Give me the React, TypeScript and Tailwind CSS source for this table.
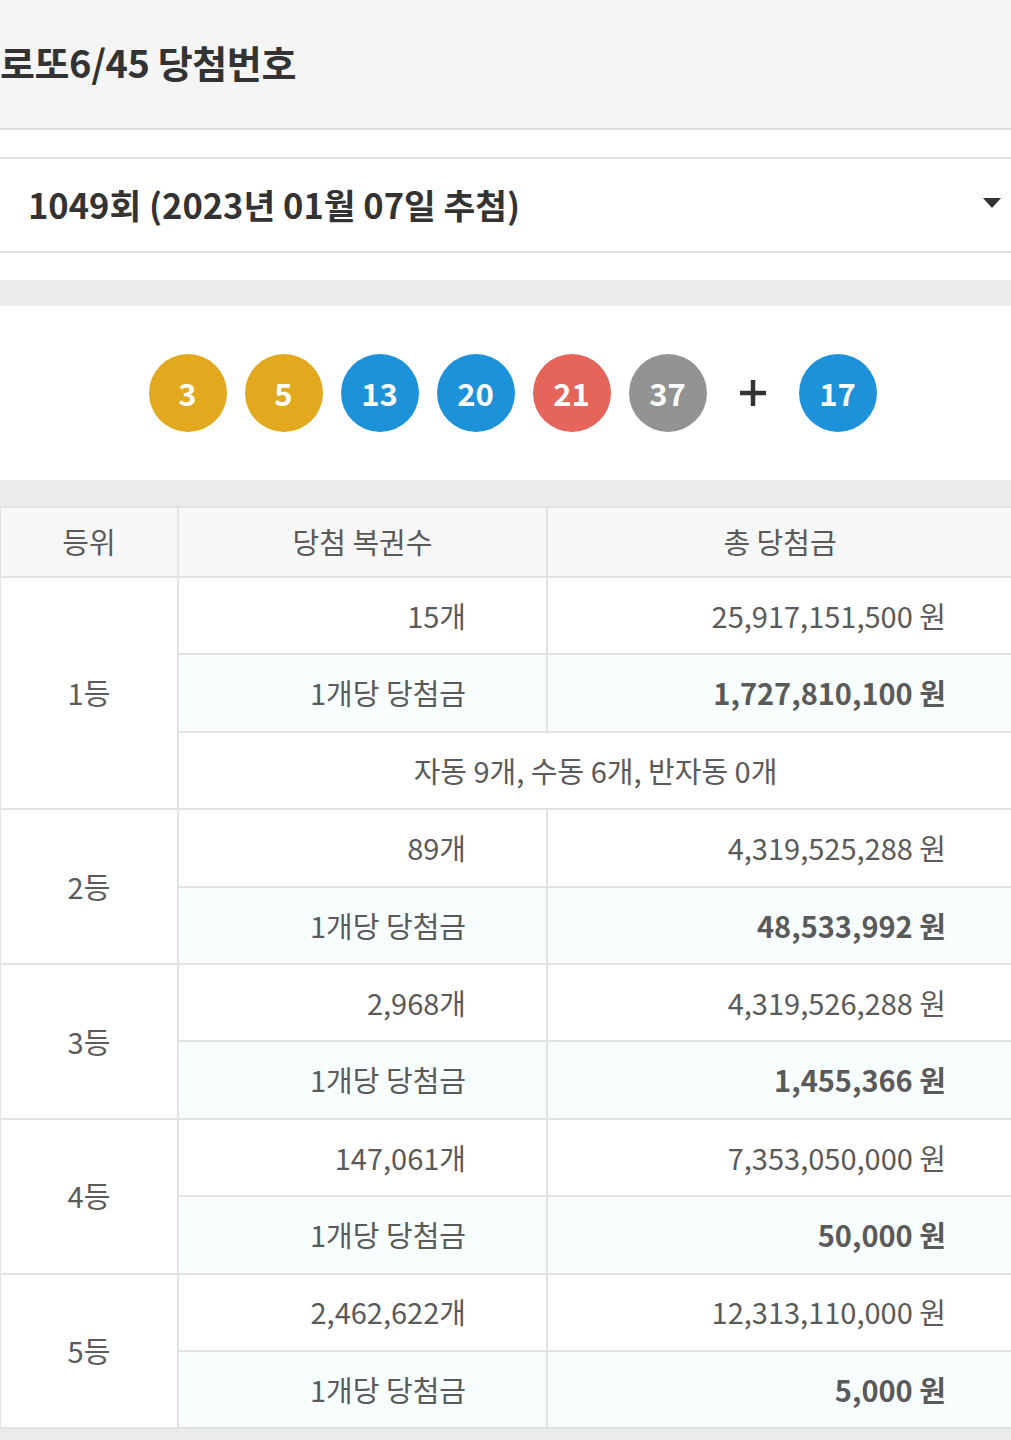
import React from "react";

const FONT = { fontFamily: '"Noto Sans CJK KR", "Noto Sans", sans-serif' };

const BALLS = [
  { n: 3, color: "bg-[#e2a91e]" },
  { n: 5, color: "bg-[#e2a91e]" },
  { n: 13, color: "bg-[#1d92d9]" },
  { n: 20, color: "bg-[#1d92d9]" },
  { n: 21, color: "bg-[#e5655a]" },
  { n: 37, color: "bg-[#939393]" },
];

const RANKS = [
  { rank: "1등", count: "15개", total: "25,917,151,500 원", each: "1,727,810,100 원", note: "자동 9개, 수동 6개, 반자동 0개" },
  { rank: "2등", count: "89개", total: "4,319,525,288 원", each: "48,533,992 원" },
  { rank: "3등", count: "2,968개", total: "4,319,526,288 원", each: "1,455,366 원" },
  { rank: "4등", count: "147,061개", total: "7,353,050,000 원", each: "50,000 원" },
  { rank: "5등", count: "2,462,622개", total: "12,313,110,000 원", each: "5,000 원" },
];

function Ball({ n, color }: { n: number; color: string }) {
  return (
    <div
      className={`w-[78px] h-[78px] rounded-full ${color} flex items-center justify-center text-white text-[31px] font-bold`}
    >
      {n}
    </div>
  );
}

export default function App() {
  const cell = "border-2 border-[#e2e2e2] p-0";
  const row = `${cell} h-[77.4px]`;

  return (
    <div className="w-[1011px] h-[1440px] overflow-hidden bg-white text-[#5a5a5a]" style={FONT}>
      <div className="h-[130px] bg-[#f5f5f5] border-b-2 border-[#dedede] flex items-center">
        <h1 className="text-[38px] font-bold text-[#333] tracking-[-0.4px] -mt-[5px]">로또6/45 당첨번호</h1>
      </div>

      <div className="h-[27px]" />

      <div className="h-[96px] border-y-2 border-[#dedede] flex items-center justify-between pl-[28px] pr-[10px]">
        <span className="text-[34.5px] font-bold text-[#333]">
          1049회 (2023년 01월 07일 추첨)
        </span>
        <svg width="18" height="12" viewBox="0 0 18 12" className="mt-[-2px]">
          <path d="M0 0 H18 L9 10 Z" fill="#333" />
        </svg>
      </div>

      <div className="h-[27px]" />
      <div className="h-[26px] bg-[#e9ebec]" />

      <div className="h-[174px] flex items-center justify-center gap-[18px] pl-[14px]">
        {BALLS.map((b) => (
          <Ball key={b.n} n={b.n} color={b.color} />
        ))}
        <div className="w-[56px] flex items-center justify-center">
          <svg width="28" height="28" viewBox="0 0 28 28">
            <path d="M14 1 V27 M1 14 H27" stroke="#333" strokeWidth="4.5" />
          </svg>
        </div>
        <Ball n={17} color="bg-[#1d92d9]" />
      </div>

      <div className="h-[26px] bg-[#e9ebec]" />

      <table className="w-[1013px] -ml-[1px] border-collapse table-fixed text-[29px]">
        <colgroup>
          <col className="w-[178px]" />
          <col className="w-[369px]" />
          <col className="w-[466px]" />
        </colgroup>
        <thead>
          <tr className="bg-[#f7f7f7]">
            <th className={`${cell} h-[70px] font-normal`}>등위</th>
            <th className={`${cell} h-[70px] font-normal`}>당첨 복권수</th>
            <th className={`${cell} h-[70px] font-normal`}>총 당첨금</th>
          </tr>
        </thead>
        <tbody>
          {RANKS.map((r) => (
            <React.Fragment key={r.rank}>
              <tr>
                <td className={`${row} text-center`} rowSpan={r.note ? 3 : 2}>
                  {r.rank}
                </td>
                <td className={`${row} text-right pr-[80px]`}>{r.count}</td>
                <td className={`${row} text-right pr-[66px]`}>{r.total}</td>
              </tr>
              <tr className="bg-[#f8fdfe]">
                <td className={`${row} text-right pr-[80px]`}>1개당 당첨금</td>
                <td className={`${row} text-right pr-[66px] font-bold`}>{r.each}</td>
              </tr>
              {r.note && (
                <tr>
                  <td className={`${row} text-center`} colSpan={2}>
                    {r.note}
                  </td>
                </tr>
              )}
            </React.Fragment>
          ))}
        </tbody>
      </table>

      <div className="h-[20px] bg-[#e9ebec]" />
    </div>
  );
}
